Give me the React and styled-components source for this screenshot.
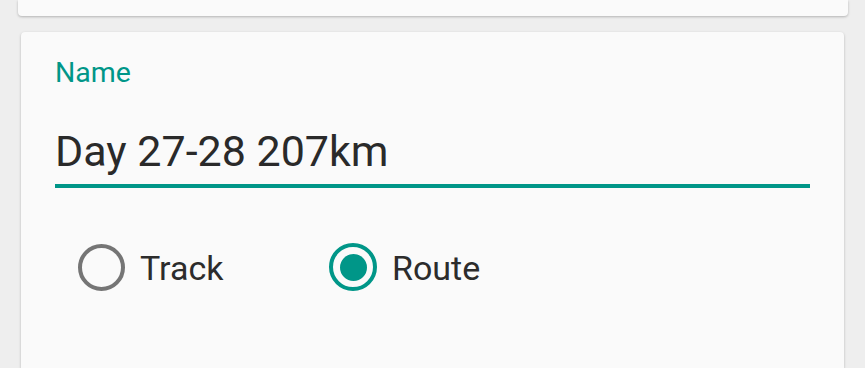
import React from "react";
import styled, { createGlobalStyle } from "styled-components";

const Global = createGlobalStyle`
  html, body { margin: 0; padding: 0; background: #eeeeee; }
  body { font-family: Roboto, "Noto Sans", "Liberation Sans", sans-serif; overflow: hidden; }
`;

const Page = styled.div`
  display: flex;
  flex-direction: column;
  gap: 16px;
  height: 368px;
  overflow: hidden;
`;

const TopCard = styled.div`
  height: 16px;
  margin: 0 17px 0 18px;
  background: #fafafa;
  border-radius: 0 0 4px 4px;
  box-shadow: 0 1px 3px rgba(0, 0, 0, 0.18), 0 1px 2px rgba(0, 0, 0, 0.08);
`;

const Card = styled.div`
  flex: 1;
  margin: 0 21px;
  padding: 24px 34px 0;
  background: #fafafa;
  border-radius: 4px 4px 0 0;
  box-shadow: 0 1px 3px rgba(0, 0, 0, 0.18), 0 1px 2px rgba(0, 0, 0, 0.08);
  display: flex;
  flex-direction: column;
`;

const Label = styled.div`
  color: #009688;
  font-size: 28.5px;
  line-height: 34px;
  height: 34px;
`;

const Field = styled.div`
  margin-top: 36px;
  padding-bottom: 8px;
  border-bottom: 4px solid #009688;
  font-size: 43px;
  line-height: 50px;
  height: 50px;
  color: #2a2a2a;
  white-space: nowrap;
`;

const RadioGroup = styled.div`
  display: flex;
  align-items: center;
  margin: 55px 0 0 23px;
  height: 48px;
`;

const Option = styled.div`
  display: flex;
  align-items: center;
  gap: 15px;
  width: 251px;
`;

const Circle = styled.div`
  box-sizing: border-box;
  width: ${(p) => (p.$checked ? 48 : 47)}px;
  height: ${(p) => (p.$checked ? 48 : 47)}px;
  border-radius: 50%;
  border: 4.5px solid ${(p) => (p.$checked ? "#009688" : "#757575")};
  display: flex;
  align-items: center;
  justify-content: center;
  flex-shrink: 0;
`;

const Dot = styled.div`
  width: 27px;
  height: 27px;
  border-radius: 50%;
  background: #009688;
`;

const OptionText = styled.span`
  font-size: 34px;
  line-height: 40px;
  margin-top: 1px;
  color: #2c2c2c;
`;

function Radio({ label, checked }) {
  return (
    <Option>
      <Circle $checked={checked}>{checked && <Dot />}</Circle>
      <OptionText>{label}</OptionText>
    </Option>
  );
}

export default function App() {
  return (
    <>
      <Global />
      <Page>
        <TopCard />
        <Card>
          <Label>Name</Label>
          <Field>Day 27-28 207km</Field>
          <RadioGroup>
            <Radio label="Track" />
            <Radio label="Route" checked />
          </RadioGroup>
        </Card>
      </Page>
    </>
  );
}
